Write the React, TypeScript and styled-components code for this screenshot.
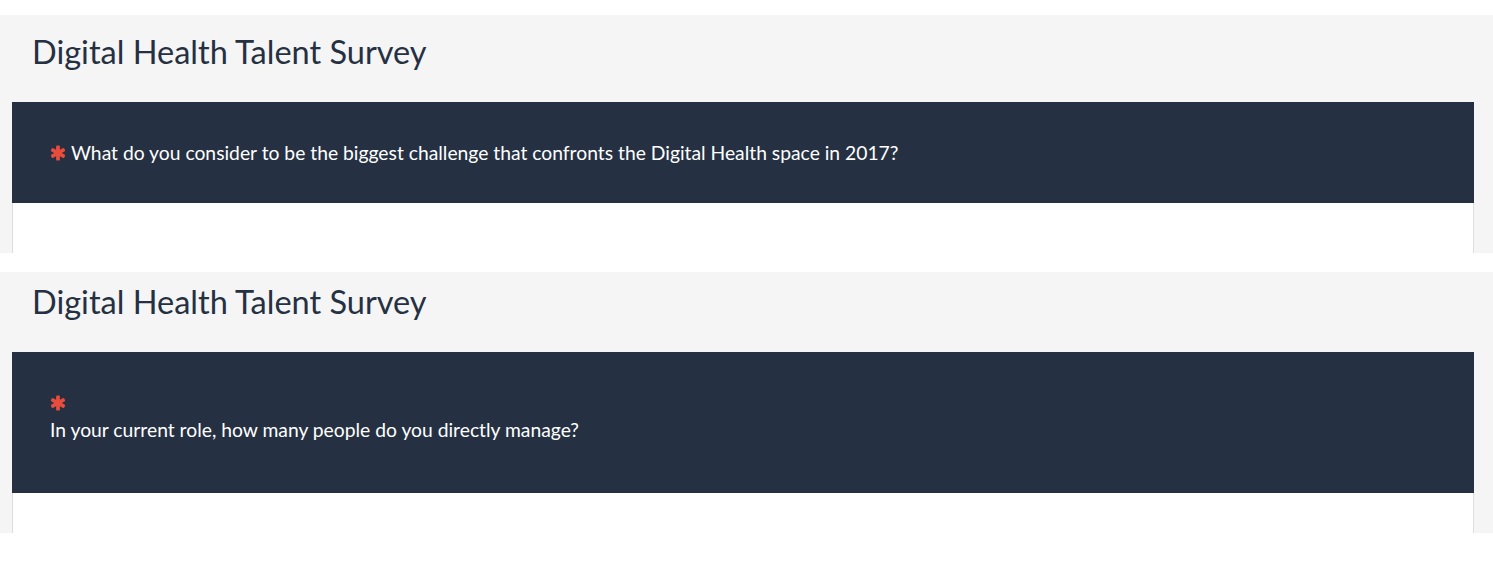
import React from "react";
import styled, { createGlobalStyle } from "styled-components";

const Global = createGlobalStyle`
  html, body { margin: 0; padding: 0; background: #ffffff; }
  body { font-family: Lato, "Open Sans", sans-serif; }
`;

const Page = styled.div`
  display: flex;
  flex-direction: column;
  gap: 19px;
  padding-top: 15px;
`;

const Panel = styled.section<{ $height: number }>`
  background: #f5f5f5;
  height: ${(p) => p.$height}px;
  overflow: hidden;
  display: flex;
  flex-direction: column;
`;

const Title = styled.h1<{ $top: number }>`
  margin: 0 0 30px 0;
  padding: ${(p) => p.$top}px 32px 0 32px;
  font-family: Lato, sans-serif;
  font-weight: 400;
  font-size: 32.5px;
  line-height: 40px;
  color: #253142;
`;

const Question = styled.div<{ $stacked: boolean }>`
  margin: 0 19px 0 12px;
  background: #253142;
  color: #ffffff;
  padding: ${(p) => (p.$stacked ? "39px 38px 51px 38px" : "39px 38px 38px 38px")};
  display: flex;
  flex-direction: ${(p) => (p.$stacked ? "column" : "row")};
  align-items: ${(p) => (p.$stacked ? "flex-start" : "center")};
  gap: ${(p) => (p.$stacked ? "3px" : "5px")};
  font-family: Lato, sans-serif;
  font-size: 19.3px;
  line-height: 24px;
`;

const Required = styled.span`
  display: inline-flex;
  align-items: center;
  height: 24px;
`;

const Body = styled.div`
  flex: 1;
  margin: 0 19px 0 12px;
  background: #ffffff;
  border-left: 1px solid #dddddd;
  border-right: 1px solid #dddddd;
`;

const Asterisk = () => (
  <svg width="16" height="16" viewBox="0 0 16 16" aria-hidden="true">
    <g fill="#e74c3c" transform="translate(8 8)">
      <rect x="-1.9" y="-7.6" width="3.8" height="15.2" rx="1.2" />
      <rect x="-1.9" y="-7.6" width="3.8" height="15.2" rx="1.2" transform="rotate(60)" />
      <rect x="-1.9" y="-7.6" width="3.8" height="15.2" rx="1.2" transform="rotate(120)" />
    </g>
  </svg>
);

type Item = { text: string; stacked: boolean; top: number; height: number };

const items: Item[] = [
  {
    text: "What do you consider to be the biggest challenge that confronts the Digital Health space in 2017?",
    stacked: false,
    top: 17,
    height: 238,
  },
  {
    text: "In your current role, how many people do you directly manage?",
    stacked: true,
    top: 10,
    height: 261,
  },
];

export default function App() {
  return (
    <>
      <Global />
      <Page>
        {items.map((it, i) => (
          <Panel key={i} $height={it.height}>
            <Title $top={it.top}>Digital Health Talent Survey</Title>
            <Question $stacked={it.stacked}>
              <Required>
                <Asterisk />
              </Required>
              <span>{it.text}</span>
            </Question>
            <Body />
          </Panel>
        ))}
      </Page>
    </>
  );
}
